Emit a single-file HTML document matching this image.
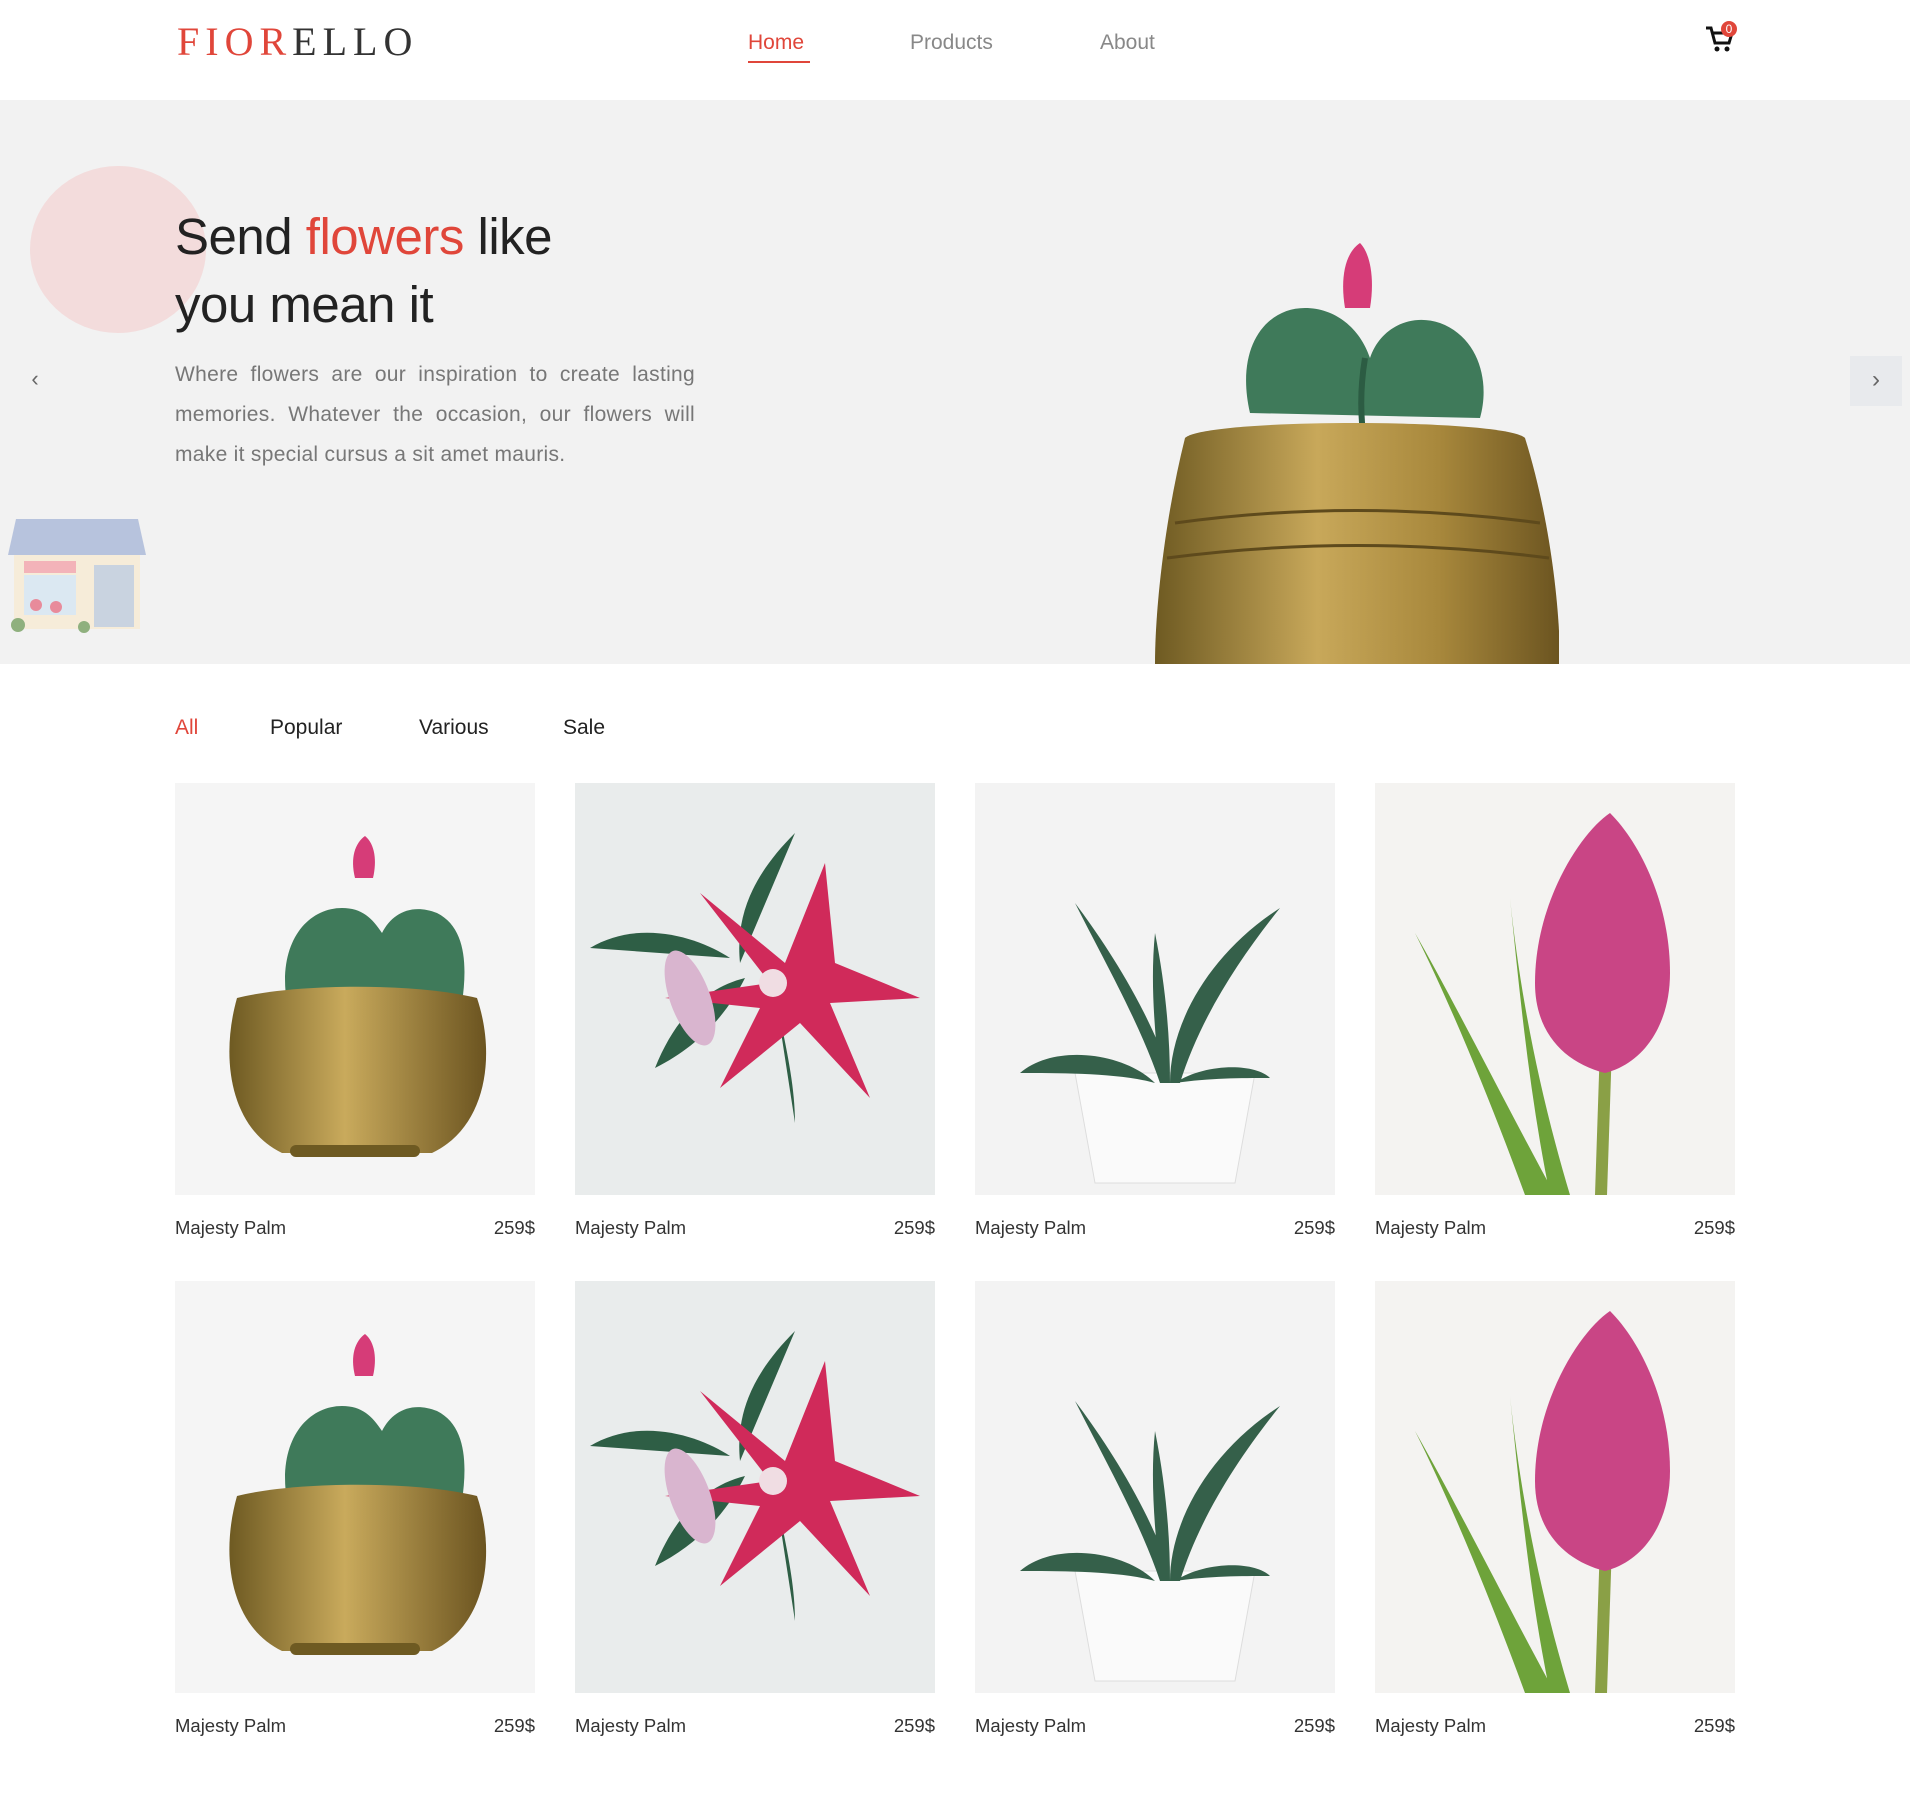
<!DOCTYPE html>
<html><head><meta charset="utf-8"><style>
*{margin:0;padding:0;box-sizing:border-box}
body{width:1910px;height:1795px;background:#fff;font-family:"Liberation Sans",sans-serif;position:relative;overflow:hidden;color:#222}
.abs{position:absolute}
.logo{left:177px;top:18px;font-family:"Liberation Serif",serif;font-size:40px;letter-spacing:6px;color:#333}
.logo span{color:#e0463a}
.nav a{position:absolute;top:31px;font-size:21px;color:#888;text-decoration:none}
.hero{left:0;top:100px;width:1910px;height:564px;background:#f2f2f2;overflow:hidden}
h1{position:absolute;left:175px;top:203px;font-size:51px;font-weight:normal;line-height:68px;color:#222;letter-spacing:-0.5px}
h1 span{color:#e0463a}
.p{left:175px;top:355px;width:520px;font-size:21px;line-height:40px;color:#777;text-align:justify;letter-spacing:0.3px}
.tabs span{position:absolute;top:716px;font-size:21px;color:#222}
.card{position:absolute;width:360px}
.card svg{display:block;width:360px;height:412px}
.lbl{display:flex;justify-content:space-between;margin-top:22px;font-size:18.5px;color:#333}
</style></head><body>
<div class="abs logo"><span>FIOR</span>ELLO</div>
<div class="nav">
<a style="left:748px;color:#e0463a">Home</a>
<div class="abs" style="left:748px;top:61px;width:62px;height:2px;background:#e0463a"></div>
<a style="left:910px">Products</a>
<a style="left:1100px">About</a>
</div>
<svg class="abs" style="left:1704px;top:20px" width="44" height="36" viewBox="0 0 44 36">
<path d="M2 8h5l4 15h14l3-10H9" fill="none" stroke="#111" stroke-width="3"/>
<circle cx="13" cy="29" r="2.5" fill="#111"/><circle cx="23" cy="29" r="2.5" fill="#111"/>
<circle cx="25" cy="9" r="8" fill="#e0463a"/><text x="25" y="13" font-size="12" fill="#fff" text-anchor="middle" font-family="Liberation Sans">0</text>
</svg>
<div class="abs hero">
<div class="abs" style="left:30px;top:66px;width:176px;height:167px;border-radius:50%;background:#f3dcdc"></div>
<div class="abs" style="left:22px;top:266px;width:26px;height:30px;color:#666;font-size:22px;text-align:center">&#8249;</div>
<div class="abs" style="left:1850px;top:256px;width:52px;height:50px;background:#e8eaed;color:#666;font-size:24px;text-align:center;line-height:48px">&#8250;</div>
<svg class="abs" style="left:6px;top:415px" width="142" height="118" viewBox="0 0 142 118">
<path d="M10 4h122l8 36H2z" fill="#b7c3dd"/>
<rect x="8" y="40" width="126" height="74" fill="#f6ecd9"/>
<rect x="18" y="46" width="52" height="12" fill="#f3b3b9"/>
<rect x="18" y="60" width="52" height="40" fill="#dbe8f2"/>
<rect x="88" y="50" width="40" height="62" fill="#c9d3e0"/>
<circle cx="30" cy="90" r="6" fill="#e88b9b"/><circle cx="50" cy="92" r="6" fill="#e88b9b"/>
<circle cx="12" cy="110" r="7" fill="#8fb07e"/><circle cx="78" cy="112" r="6" fill="#8fb07e"/>
</svg>
<svg class="abs" style="left:1155px;top:138px" width="404" height="426" viewBox="0 0 404 426">
<defs><linearGradient id="gh" x1="0" x2="1"><stop offset="0" stop-color="#6e5a22"/><stop offset=".4" stop-color="#c8a85a"/><stop offset=".7" stop-color="#a8883c"/><stop offset="1" stop-color="#6b5420"/></linearGradient></defs>
<path d="M95 175C80 110 110 70 150 70c30 0 55 20 65 50 10-30 40-45 70-35 40 15 50 60 40 95z" fill="#3f7a5a"/>
<path d="M210 120c-5 30-5 60 0 90" stroke="#2c5c43" stroke-width="6" fill="none"/>
<path d="M190 70c-5-30 0-55 15-65 10 10 15 35 10 65z" fill="#d63c78"/>
<path d="M30 200c20-20 320-20 340 0 25 80 35 170 35 226H0C0 370 10 280 30 200z" fill="url(#gh)"/>
<path d="M20 285q180-25 365 0M12 320q190-25 382 0" stroke="#5e4a1c" stroke-width="3" fill="none"/>
</svg>
</div>
<h1 class="abs">Send <span>flowers</span> like<br>you mean it</h1>
<div class="abs p">Where flowers are our inspiration to create lasting memories. Whatever the occasion, our flowers will make it special cursus a sit amet mauris.</div>
<div class="tabs"><span style="left:175px;color:#e0463a">All</span><span style="left:270px">Popular</span><span style="left:419px">Various</span><span style="left:563px">Sale</span></div>

<svg width="0" height="0" style="position:absolute"><defs>
<linearGradient id="g1" x1="0" x2="1"><stop offset="0" stop-color="#6e5a22"/><stop offset=".45" stop-color="#c9aa5c"/><stop offset="1" stop-color="#6b5420"/></linearGradient>
<symbol id="cac" viewBox="0 0 360 412"><rect width="360" height="412" fill="#f5f5f5"/>
<path d="M112 220c-10-60 20-95 55-95 20 0 30 10 40 25 10-20 30-30 55-20 30 15 30 55 25 90z" fill="#3f7a5a"/>
<path d="M180 95c-5-20 0-35 10-42 10 8 12 25 8 42z" fill="#d63c78"/>
<path d="M62 215c60-15 180-15 240 0 20 60 8 130-45 155h-150C55 345 45 275 62 215z" fill="url(#g1)"/>
<rect x="115" y="362" width="130" height="12" rx="6" fill="#6e5a22"/>
</symbol>
<symbol id="lil" viewBox="0 0 360 412"><rect width="360" height="412" fill="#e9ecec"/>
<path d="M220 50c-40 40-60 80-55 130z" fill="#2e5e45"/><path d="M15 165c50-30 110-10 140 10z" fill="#2e5e45"/>
<path d="M80 285c20-50 50-80 90-90 -20 40-50 70-90 90zM200 210c10 50 20 90 20 130z" fill="#2e5e45"/>
<path d="M195 200l-70-90 85 70 40-100 10 100 85 35-90 5 40 95-70-75-80 65 40-80-95-10z" fill="#d02a5a"/>
<ellipse cx="115" cy="215" rx="20" ry="50" fill="#d9b5cf" transform="rotate(-20 115 215)"/>
<circle cx="198" cy="200" r="14" fill="#f0dde3"/>
</symbol>
<symbol id="alo" viewBox="0 0 360 412"><rect width="360" height="412" fill="#f3f3f3"/>
<path d="M100 290h180l-20 110h-140z" fill="#fafafa" stroke="#ddd"/>
<path d="M185 300c-20-60-60-130-85-180 30 40 70 100 95 170zM195 300c0-60 40-130 110-175-40 50-80 110-100 175zM185 300c-5-50-10-100-5-150 10 50 15 100 15 150zM180 300c-30-30-100-40-135-10 40 0 100 0 135 10zM200 300c30-20 80-20 95-5-30 0-60 0-95 5z" fill="#35604a"/>
</symbol>
<symbol id="tul" viewBox="0 0 360 412"><rect width="360" height="412" fill="#f4f3f1"/>
<path d="M40 150c40 80 80 180 110 262h30C130 320 80 220 40 150zM135 115c10 100 20 200 40 297h20c-30-100-50-200-60-297z" fill="#6ea33a"/>
<path d="M220 412l5-150h12l-5 150z" fill="#8aa046"/>
<path d="M235 30c-30 20-75 90-75 170 0 50 30 80 70 90 40-10 65-50 65-100 0-70-30-130-60-160z" fill="#c94585"/>
</symbol>
</defs></svg>

<div class="card" style="left:175px;top:783px"><svg><use href="#cac"/></svg><div class="lbl"><span>Majesty Palm</span><span>259$</span></div></div>
<div class="card" style="left:575px;top:783px"><svg><use href="#lil"/></svg><div class="lbl"><span>Majesty Palm</span><span>259$</span></div></div>
<div class="card" style="left:975px;top:783px"><svg><use href="#alo"/></svg><div class="lbl"><span>Majesty Palm</span><span>259$</span></div></div>
<div class="card" style="left:1375px;top:783px"><svg><use href="#tul"/></svg><div class="lbl"><span>Majesty Palm</span><span>259$</span></div></div>
<div class="card" style="left:175px;top:1281px"><svg><use href="#cac"/></svg><div class="lbl"><span>Majesty Palm</span><span>259$</span></div></div>
<div class="card" style="left:575px;top:1281px"><svg><use href="#lil"/></svg><div class="lbl"><span>Majesty Palm</span><span>259$</span></div></div>
<div class="card" style="left:975px;top:1281px"><svg><use href="#alo"/></svg><div class="lbl"><span>Majesty Palm</span><span>259$</span></div></div>
<div class="card" style="left:1375px;top:1281px"><svg><use href="#tul"/></svg><div class="lbl"><span>Majesty Palm</span><span>259$</span></div></div>
</body></html>
